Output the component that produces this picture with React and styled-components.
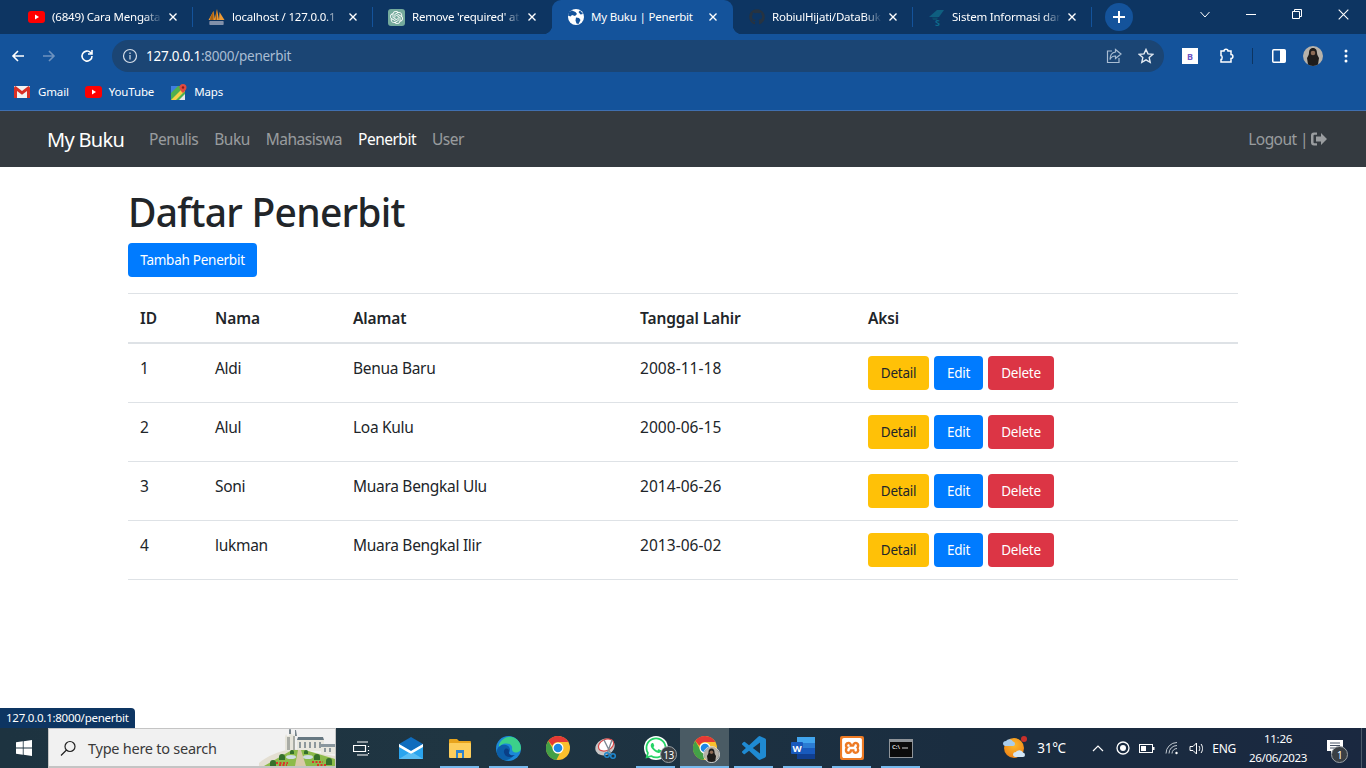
import React from 'react';
import styled, { createGlobalStyle } from 'styled-components';
import { FaGithub, FaWhatsapp } from 'react-icons/fa';
import { SiOpenai, SiXampp } from 'react-icons/si';

const UI_FONT = `"Noto Sans", "Open Sans", sans-serif`;

const GlobalStyle = createGlobalStyle`
  html, body {
    margin: 0;
    height: 100%;
    overflow: hidden;
    background: #fff;
    font-family: ${UI_FONT};
  }
  * { box-sizing: border-box; }
`;

const Shell = styled.div`
  display: flex;
  flex-direction: column;
  height: 768px;
`;

/* browser tabs */
const TabStrip = styled.div`
  display: flex;
  align-items: stretch;
  height: 34px;
  padding-left: 13px;
  background: #0d3562;
`;

const TabBox = styled.div`
  position: relative;
  display: flex;
  align-items: center;
  width: ${(p) => p.$width}px;
  padding: 0 16px 0 15px;
  gap: 7px;
  color: #fff;
  background: ${(p) => (p.$active ? '#14539b' : 'transparent')};
  border-radius: 9px 9px 0 0;

  ${(p) => !p.$active && !p.$noSep && `
    &::after {
      content: '';
      position: absolute;
      right: 0;
      top: 7px;
      height: 20px;
      width: 1px;
      background: #14539b;
    }
  `}

  ${(p) => p.$active && `
    &::before, &::after {
      content: '';
      position: absolute;
      bottom: 0;
      width: 9px;
      height: 9px;
    }
    &::before {
      left: -9px;
      background: radial-gradient(circle at 0 0, transparent 9px, #14539b 9.5px);
    }
    &::after {
      right: -9px;
      background: radial-gradient(circle at 100% 0, transparent 9px, #14539b 9.5px);
    }
  `}
`;

const TabIcon = styled.span`
  display: flex;
  flex: none;
  width: 17px;
  height: 17px;
  align-items: center;
  justify-content: center;
`;

const TabTitle = styled.span`
  flex: 1;
  min-width: 0;
  overflow: hidden;
  white-space: nowrap;
  font-size: 11.5px;
  letter-spacing: -0.2px;
  line-height: 16px;
  ${(p) => p.$fade && `mask-image: linear-gradient(to right, #000 84%, transparent 100%);`}
`;

const CloseSvg = styled.svg`
  flex: none;
`;

const NewTab = styled.div`
  display: flex;
  align-items: center;
  justify-content: center;
  width: 28px;
  height: 28px;
  margin: 3px 0 0 13px;
  border-radius: 50%;
  background: #14539b;
`;

const WindowControls = styled.div`
  display: flex;
  align-items: center;
  align-self: flex-start;
  margin-left: auto;
  color: #fff;
`;

const WinButton = styled.div`
  display: flex;
  align-items: center;
  justify-content: center;
  width: 46px;
  height: 28px;
`;

/* address bar row */
const Toolbar = styled.div`
  display: flex;
  align-items: center;
  height: 42px;
  padding: 2px 0 0 4px;
  background: #14539b;
`;

const NavIcon = styled.div`
  display: flex;
  align-items: center;
  justify-content: center;
  flex: none;
  width: ${(p) => p.$w || 28}px;
  height: 28px;
  margin-right: ${(p) => p.$mr || 0}px;
`;

const Omnibox = styled.div`
  display: flex;
  align-items: center;
  flex: none;
  width: 1052px;
  height: 32px;
  margin: 0 12px 0 11px;
  padding: 0 2px 0 10px;
  background: #1b4574;
  border-radius: 16px;
`;

const Url = styled.span`
  margin-left: 8px;
  font-size: 13.5px;
  letter-spacing: -0.25px;
  color: #a9bdd3;
  flex: 1;

  b {
    font-weight: 400;
    color: #fff;
  }
`;

const ExtBadge = styled.span`
  display: flex;
  align-items: center;
  justify-content: center;
  width: 16px;
  height: 16px;
  background: #fff;
  color: #6f55c4;
  font-size: 9px;
  font-weight: 700;
`;

const ToolDivider = styled.span`
  flex: none;
  width: 1px;
  height: 16px;
  margin: 0 5px 0 4px;
  background: #0d3562;
`;

/* bookmarks row */
const Bookmarks = styled.div`
  display: flex;
  align-items: center;
  height: 34px;
  padding: 0 0 3px 14px;
  background: #14539b;
`;

const Bookmark = styled.div`
  display: flex;
  align-items: center;
  gap: ${(p) => p.$gap}px;
  margin-right: ${(p) => p.$mr}px;
  color: #fff;
  font-size: 11.5px;
  letter-spacing: -0.15px;
`;

/* the page itself */
const Page = styled.div`
  position: relative;
  flex: 1;
  min-height: 0;
  background: #fff;
  color: #212529;
`;

const Navbar = styled.nav`
  display: flex;
  align-items: center;
  height: 57px;
  padding: 0 39px 0 47px;
  background: #343a40;
  border-top: 1px solid #3f6fb0;
`;

const Brand = styled.a`
  margin-right: 25px;
  font-size: 20px;
  letter-spacing: -0.7px;
  color: #fff;
`;

const NavLink = styled.a`
  margin-right: 16px;
  font-size: 15.5px;
  letter-spacing: -0.5px;
  color: ${(p) => (p.$active ? '#fff' : 'rgba(255,255,255,.5)')};
`;

const LogoutLink = styled.a`
  display: flex;
  align-items: center;
  gap: 3px;
  margin-left: auto;
  font-size: 15.5px;
  letter-spacing: -0.55px;
  color: rgba(255,255,255,.5);
`;

const Container = styled.main`
  width: 1110px;
  margin: 0 auto;
  padding-top: 21px;
`;

const Title = styled.h1`
  margin: 0 0 7px;
  font-size: 39px;
  font-weight: 500;
  line-height: 48px;
  letter-spacing: -0.73px;
`;

const Button = styled.button`
  width: ${(p) => p.$w}px;
  height: 34px;
  padding: 0 0 1px;
  border: 0;
  border-radius: 4px;
  font-family: inherit;
  font-size: 13.5px;
  letter-spacing: -0.25px;
  color: ${(p) => (p.$tone === 'warning' ? '#212529' : '#fff')};
  background: ${(p) =>
    p.$tone === 'warning' ? '#ffc107' : p.$tone === 'danger' ? '#dc3545' : '#007bff'};
`;

const Table = styled.table`
  width: 100%;
  margin-top: 16px;
  border-collapse: collapse;
  table-layout: fixed;
  font-size: 15.5px;
  letter-spacing: -0.3px;

  th, td {
    padding: 12px;
    text-align: left;
    vertical-align: top;
    line-height: 24px;
    border-top: 1px solid #dee2e6;
  }
  th {
    font-weight: 600;
    letter-spacing: -0.1px;
    border-bottom: 2px solid #dee2e6;
  }
  tr:last-child td {
    border-bottom: 1px solid #dee2e6;
  }
`;

const DateCell = styled.td`
  letter-spacing: 0.05px;
`;

const Actions = styled.div`
  display: flex;
  gap: 5px;
`;

const StatusBubble = styled.div`
  position: absolute;
  left: 0;
  bottom: 0;
  height: 20px;
  padding: 0 6px;
  background: #0d3562;
  border-top-right-radius: 4px;
  color: #fff;
  font-size: 11.5px;
  letter-spacing: -0.25px;
  line-height: 19px;
`;

/* windows taskbar */
const Taskbar = styled.footer`
  display: flex;
  align-items: stretch;
  flex: none;
  height: 40px;
  background: linear-gradient(to right, #1d3340, #1f3542 35%, #1a2d40 70%, #1a2840);
  color: #fff;
`;

const StartButton = styled.div`
  display: flex;
  align-items: center;
  justify-content: center;
  width: 48px;
`;

const SearchBox = styled.div`
  position: relative;
  display: flex;
  align-items: center;
  width: 288px;
  padding-left: 11px;
  gap: 12px;
  background: #f1f1f1;
  border: 1px solid #c4c4c4;
  border-bottom-width: 2px;
  overflow: hidden;
  color: #3a3a3a;
  font-size: 14.5px;
  letter-spacing: -0.25px;
`;

const Scenery = styled.svg`
  position: absolute;
  right: 0;
  bottom: 0;
`;

const TaskItem = styled.div`
  position: relative;
  display: flex;
  align-items: center;
  justify-content: center;
  width: ${(p) => p.$w || 49}px;
  background: ${(p) => (p.$active ? '#4a5b64' : 'transparent')};

  ${(p) => p.$open && `
    &::after {
      content: '';
      position: absolute;
      bottom: 0;
      left: ${p.$active ? 0 : 5}px;
      right: ${p.$active ? 0 : 5}px;
      height: 2px;
      background: #76b9ed;
    }
  `}
`;

const CountBadge = styled.span`
  position: absolute;
  display: flex;
  align-items: center;
  justify-content: center;
  right: ${(p) => p.$right}px;
  bottom: ${(p) => p.$bottom}px;
  width: 17px;
  height: 17px;
  border-radius: 50%;
  background: #3a3f44;
  border: 1px solid #9aa0a5;
  color: #fff;
  font-size: 10px;
  letter-spacing: -0.5px;
`;

const AvatarBadge = styled.span`
  position: absolute;
  display: flex;
  right: 9px;
  bottom: 5px;
  border-radius: 50%;
  border: 1px solid #d8d8d8;
`;

const Tray = styled.div`
  display: flex;
  align-items: center;
  margin-left: auto;
`;

const WeatherSlot = styled.span`
  display: flex;
  margin-right: 9px;
`;

const Temperature = styled.span`
  margin-right: 20px;
  font-size: 13.5px;
  letter-spacing: -0.3px;
`;

const TrayIcon = styled.span`
  display: flex;
  align-items: center;
  justify-content: center;
  width: 24.5px;
`;

const Lang = styled.span`
  margin: 0 12px 0 4px;
  font-size: 12px;
  letter-spacing: -0.3px;
`;

const Clock = styled.div`
  width: 60px;
  text-align: center;
  font-size: 11.5px;
  letter-spacing: -0.3px;
  line-height: 19px;
`;

const NoticeArea = styled.div`
  position: relative;
  display: flex;
  align-items: center;
  justify-content: center;
  width: 54px;
  height: 100%;
  padding-bottom: 3px;
  border-right: 1px solid #4b5a6a;
  margin-right: 4px;
`;

const GptTile = styled.span`
  display: flex;
  padding: 2px;
  background: #74aa9c;
  border-radius: 3px;
`;

const WhatsappTile = styled.span`
  display: flex;
  background: #fff;
  border-radius: 50%;
`;

const XamppTile = styled.span`
  display: flex;
  padding: 2px;
  background: #ed7a24;
  border-radius: 2px;
`;

/* drawn icons */
const YoutubeIcon = () => (
  <svg width="17" height="12" viewBox="0 0 17 12">
    <rect width="17" height="12" rx="3" fill="#f00" />
    <path d="M7 3.5v5l4-2.5z" fill="#fff" />
  </svg>
);

const SailIcon = () => (
  <svg width="17" height="17" viewBox="0 0 17 17">
    <path d="M.5 11 5.500 2 7 11zM6.500 11 9 0l2 11zM11 11l.5-8 5 8z" fill="#ee9a34" />
    <path d="M2.500 8 5.500 2v9H2zM9 0v11H7.500z" fill="#a9610f" />
    <rect x="1" y="12" width="15" height="4" rx="1" fill="#5d6f8f" />
    <path d="M2 13h13M2 15h13" stroke="#c6d0dd" strokeWidth=".7" />
  </svg>
);

const GlobeIcon = () => (
  <svg width="16" height="16" viewBox="0 0 16 16">
    <circle cx="8" cy="8" r="8" fill="#fff" />
    <path d="M4 1.500 7.500 3 9 5 7 7 4 6 2.500 7.500 0 6.500 1 3zM8 8.500l3 .5 1.500 2-2 4-2-.500-1-3zM12 1.500l3 3.500-2.500.5-2-2.500z" fill="#14539b" />
  </svg>
);

const ScholarIcon = () => (
  <svg width="17" height="19" viewBox="0 0 17 19">
    <path d="M1 9 9 2h7l-5 7z" fill="#0f5f80" />
    <path d="M4 9.500h6l-1 2.500H5z" fill="#0d4c6c" />
    <text x="7" y="18" fontSize="9" fontWeight="700" fill="#0e6a8c">S</text>
  </svg>
);

const CloseGlyph = ({ size = 8, weight = 1.4 }) => (
  <CloseSvg width={size} height={size} viewBox="0 0 8 8">
    <path d="M.5.500l7 7M7.500.500l-7 7" stroke="#fff" strokeWidth={weight} fill="none" />
  </CloseSvg>
);

const Line = ({ d, w = 16, h = 16, stroke = '#fff', sw = 1.6 }) => (
  <svg width={w} height={h} viewBox={`0 0 ${w} ${h}`} fill="none" stroke={stroke} strokeWidth={sw}>
    <path d={d} />
  </svg>
);

const GmailIcon = () => (
  <svg width="16" height="12" viewBox="0 0 16 12">
    <rect width="16" height="12" rx="1" fill="#f2f2f2" />
    <path d="M0 1.500V12h3V5l5 3.800L13 5v7h3V1.500L14.500 0 8 5 1.500 0z" fill="#d93025" />
  </svg>
);

const MapsIcon = () => (
  <svg width="16" height="16" viewBox="0 0 16 16">
    <rect y="2" width="14" height="14" fill="#4fb04f" />
    <path d="M0 16 14 2v5L5 16z" fill="#f7d046" />
    <path d="M0 2h7L0 9z" fill="#3f7fe0" />
    <path d="M8 16l6-6v6z" fill="#e8e8e8" />
    <path d="M12 0a3.500 3.500 0 0 1 3.500 3.500C15.500 6 12 9 12 9S8.500 6 8.500 3.500A3.500 3.500 0 0 1 12 0z" fill="#e04a3f" />
    <circle cx="12" cy="3.500" r="1.200" fill="#8c1d18" />
  </svg>
);

const Avatar = ({ size = 20 }) => (
  <svg width={size} height={size} viewBox="0 0 20 20">
    <circle cx="10" cy="10" r="10" fill="#b7b2aa" />
    <path d="M10 2c3 0 4 2.500 4 5 0 2 1 3 2 5l-1 6.500a10 10 0 0 1-10 0L4 12c1-2 2-3 2-5 0-2.500 1-5 4-5z" fill="#1e1c1b" />
    <circle cx="10" cy="7" r="2.300" fill="#8b6a55" />
  </svg>
);

const ChromeIcon = ({ size = 24 }) => (
  <svg width={size} height={size} viewBox="0 0 24 24">
    <circle cx="12" cy="12" r="12" fill="#fbc02d" />
    <path d="M12 0a12 12 0 0 1 10.400 6H12a6 6 0 0 0-5.600 3.800L2.300 4.900A12 12 0 0 1 12 0z" fill="#e53935" />
    <path d="M2.300 4.900l5 8.600a5.500 5.500 0 0 0 6.500 4.100L10.300 24A12 12 0 0 1 2.300 4.900z" fill="#43a047" />
    <circle cx="12" cy="12" r="5.500" fill="#fff" />
    <circle cx="12" cy="12" r="4.300" fill="#1e88e5" />
  </svg>
);

const EdgeIcon = () => (
  <svg width="25" height="25" viewBox="0 0 25 25">
    <circle cx="12.500" cy="12.500" r="12.500" fill="#1b88d8" />
    <path d="M3 9C5 3 11 0 16 1c5 1 9 6 9 11 0 3-3 5-6 4.500-2-.3-3-2-3-3.500 1-4-3-6-7-5.500S4 10 3 14z" fill="#3cd08a" />
    <path d="M1 14c1-4 5-6 9-5 4 1 5 5 3 8-1 2 1 3.500 4 3-3 4-9 6-13 2-3-2-3.500-5-3-8z" fill="#0c5ea8" />
    <path d="M9 13c2-1 4 0 4 2-1 3 2 5 6 4-2 2-6 3-9 1-2-2-3-5-1-7z" fill="#0a3f86" />
  </svg>
);

const MailIcon = () => (
  <svg width="24" height="22" viewBox="0 0 24 22">
    <rect y="7" width="24" height="15" fill="#2aa4ee" />
    <path d="M0 7 12 0l12 7-12 7z" fill="#0f6cbd" />
    <path d="M0 7l12 7 12-7v3l-12 7-12-7z" fill="#fff" />
    <path d="M0 22 10 15.800l2 1.200 2-1.200L24 22z" fill="#59bdf4" />
  </svg>
);

const FolderIcon = () => (
  <svg width="22" height="19" viewBox="0 0 22 19">
    <path d="M0 1a1 1 0 0 1 1-1h7l2 2h11a1 1 0 0 1 1 1v3H0z" fill="#e7a41d" />
    <rect y="4" width="22" height="15" rx="1" fill="#fcce5c" />
    <rect x="7" y="11" width="8" height="8" fill="#2e84cc" />
    <rect x="9" y="14" width="4" height="5" fill="#fcce5c" />
  </svg>
);

const SnipIcon = () => (
  <svg width="24" height="24" viewBox="0 0 24 24">
    <ellipse cx="10" cy="11" rx="10" ry="8" transform="rotate(-25 10 11)" fill="#c8c6c6" />
    <ellipse cx="11" cy="9" rx="8" ry="5.500" transform="rotate(-25 11 9)" fill="#fff" stroke="#d84a4a" strokeWidth="1.200" />
    <path d="M9 4l7 14M17 4l-5 14" stroke="#7d8a94" strokeWidth="1.400" />
    <circle cx="12" cy="19" r="2.300" fill="none" stroke="#1f88cf" strokeWidth="1.500" />
    <circle cx="18" cy="20" r="2.300" fill="none" stroke="#1f88cf" strokeWidth="1.500" />
  </svg>
);

const VscodeIcon = () => (
  <svg width="24" height="24" viewBox="0 0 24 24">
    <path fill="#1f8ad2" d="M23.15 2.587L18.21.21a1.494 1.494 0 0 0-1.705.29l-9.46 8.63-4.12-3.128a.999.999 0 0 0-1.276.057L.327 7.261A1 1 0 0 0 .326 8.74L3.899 12 .326 15.26a1 1 0 0 0 .001 1.479L1.65 17.94a.999.999 0 0 0 1.276.057l4.12-3.128 9.46 8.63a1.492 1.492 0 0 0 1.704.29l4.942-2.377A1.5 1.5 0 0 0 24 20.06V3.939a1.5 1.5 0 0 0-.85-1.352zm-5.146 14.861L10.826 12l7.178-5.448v10.896z" />
  </svg>
);

const WordIcon = () => (
  <svg width="24" height="22" viewBox="0 0 24 22">
    <rect x="6" width="18" height="22" rx="1" fill="#2b7cd3" />
    <rect x="6" y="0" width="18" height="6" fill="#41a5ee" />
    <rect x="6" y="11" width="18" height="6" fill="#185abd" />
    <rect x="6" y="17" width="18" height="5" fill="#103f91" />
    <rect y="5" width="12" height="12" rx="1" fill="#185abd" />
    <text x="6" y="14.500" textAnchor="middle" fontSize="9.500" fontWeight="700" fill="#fff">W</text>
  </svg>
);

const CmdIcon = () => (
  <svg width="24" height="19" viewBox="0 0 24 19">
    <rect width="24" height="19" fill="#8f9499" />
    <rect x="1" y="3" width="22" height="15" fill="#0b0b0b" />
    <text x="3" y="9.500" fontSize="6" fontWeight="700" fill="#d0d0d0">C:\</text>
    <path d="M13 9h6" stroke="#d0d0d0" />
  </svg>
);

const WeatherIcon = () => (
  <svg width="26" height="26" viewBox="0 0 26 26">
    <defs>
      <radialGradient id="sun" cx="50%" cy="35%" r="70%">
        <stop offset="0" stopColor="#fdbb2d" />
        <stop offset="1" stopColor="#ee7f14" />
      </radialGradient>
    </defs>
    <circle cx="12" cy="13" r="10" fill="url(#sun)" />
    <circle cx="22" cy="4" r="3" fill="#c9302a" />
    <path d="M1 9a3 3 0 0 1 3-3 4 4 0 0 1 7 .5 2.500 2.500 0 0 1 2 2.500 2 2 0 0 1-2 2H3a2.500 2.500 0 0 1-2-2z" fill="#a9cdec" />
    <path d="M11 20a3 3 0 0 1 3-3 4 4 0 0 1 7 .5 2.500 2.500 0 0 1 2 2.500 2 2 0 0 1-2 2H13a2.500 2.500 0 0 1-2-2z" fill="#d3e6f6" />
  </svg>
);

const ShareIcon = () => (
  <svg width="16" height="16" viewBox="0 0 16 16" fill="none" stroke="#a9bdd3" strokeWidth="1.200">
    <path d="M6 3H1.500v11.500H13V10" />
    <path d="M9.500 1.500 15 6l-5.500 4.500V8C7 8 5 9 4 11.500 4 7 6 4.500 9.500 4z" />
  </svg>
);

const StarIcon = () => (
  <svg width="16" height="16" viewBox="0 0 16 16" fill="none" stroke="#e3eaf2" strokeWidth="1.400">
    <path d="M8 1.500l2 4.400 4.800.5-3.600 3.200 1 4.700L8 11.900l-4.200 2.400 1-4.700L1.200 6.400 6 5.900z" />
  </svg>
);

const SignOutIcon = () => (
  <svg width="16" height="16" viewBox="0 0 16 16" fill="currentColor">
    <path d="M6 1.500H3a3 3 0 0 0-3 3v7a3 3 0 0 0 3 3h3V12.200H3.500a1 1 0 0 1-1-1V4.800a1 1 0 0 1 1-1H6z" />
    <path d="M5 5.500h5V2l6 6-6 6v-3.500H5z" />
  </svg>
);

const CastleGarden = () => (
  <Scenery width="76" height="38" viewBox="0 0 76 38">
    <path d="M0 38v-3C8 28 20 23 33 21l43 7v10z" fill="#e4dfd2" />
    <path d="M26 9l1-3 1 2h2l1-4h1l1 3 2-1 1 3v14H26z" fill="#e6e4da" />
    <path d="M28 9h3v13h-3zM34 8h2v14h-2z" fill="#a9aca6" />
    <path d="M30 2l1-2 1 2v4h-2zM36 2h1l1 6h-2z" fill="#76838a" />
    <path d="M38 12h27v11H38z" fill="#e9e8df" />
    <path d="M39 9h25l1 3H38z" fill="#667781" />
    <path d="M62 18h14v8H62z" fill="#e9e8df" />
    <path d="M62 16h14v3H62z" fill="#8a979e" />
    <path d="M41 14v6M46 14v6M51 14v6M56 14v6M61 14v6M66 20v4M71 20v4" stroke="#6f7e86" strokeWidth="1.500" />
    <path d="M5 38 33 22h13l30 9v7z" fill="#8dbb4a" />
    <path d="M36 38l3-16h3l5 16z" fill="#d8caa8" />
    <ellipse cx="32" cy="29" rx="5" ry="2" fill="#cfdde2" />
    <ellipse cx="49" cy="29" rx="5" ry="2" fill="#cfdde2" />
    <path d="M11 38v-3a3 3 0 0 1 6 0v3zM20 32v-3a3 3 0 0 1 6 0v3zM31 26v-2a2 2 0 0 1 4 0v2zM45 26v-2a2 2 0 0 1 4 0v2zM55 32v-3a3 3 0 0 1 6 0v3zM67 37v-4a3 3 0 0 1 6 0v4z" fill="#35702b" />
    <path d="M17 35h12M20 37h8M53 34h11M58 37h9" stroke="#d8362b" strokeWidth="2" strokeDasharray="2 1.500" />
  </Scenery>
);

const tabs = [
  { title: '(6849) Cara Mengata', icon: <YoutubeIcon />, width: 180 },
  { title: 'localhost / 127.0.0.1', icon: <SailIcon />, width: 180 },
  { title: "Remove 'required' at", icon: <GptTile><SiOpenai size={13} color="#fff" /></GptTile>, width: 179, noSep: true },
  { title: 'My Buku | Penerbit', icon: <GlobeIcon />, width: 181, active: true },
  { title: 'RobiulHijati/DataBuk', icon: <FaGithub size={16} color="#263341" />, width: 180 },
  { title: 'Sistem Informasi dar', icon: <ScholarIcon />, width: 179 },
];

const penerbit = [
  { id: 1, nama: 'Aldi', alamat: 'Benua Baru', tanggal: '2008-11-18' },
  { id: 2, nama: 'Alul', alamat: 'Loa Kulu', tanggal: '2000-06-15' },
  { id: 3, nama: 'Soni', alamat: 'Muara Bengkal Ulu', tanggal: '2014-06-26' },
  { id: 4, nama: 'lukman', alamat: 'Muara Bengkal Ilir', tanggal: '2013-06-02' },
];

const menu = ['Penulis', 'Buku', 'Mahasiswa', 'Penerbit', 'User'];

export default function App() {
  return (
    <Shell>
      <GlobalStyle />

      <TabStrip>
        {tabs.map((t) => (
          <TabBox key={t.title} $width={t.width} $active={t.active} $noSep={t.noSep}>
            <TabIcon>{t.icon}</TabIcon>
            <TabTitle $fade={!t.active}>{t.title}</TabTitle>
            <CloseGlyph />
          </TabBox>
        ))}
        <NewTab>
          <Line d="M7 1v12M1 7h12" w={14} h={14} sw={2} />
        </NewTab>
        <WindowControls>
          <WinButton>
            <Line d="M.5 1 5 6l4.500-5" w={10} h={7} sw={1} />
          </WinButton>
          <WinButton>
            <Line d="M0 .5h10" w={10} h={1} sw={1} />
          </WinButton>
          <WinButton>
            <Line d="M.5 2.500h7v7h-7zM2.500 2.500v-2h7v7h-2" w={10} h={10} sw={1} />
          </WinButton>
          <WinButton>
            <CloseGlyph size={11} weight={0.8} />
          </WinButton>
        </WindowControls>
      </TabStrip>

      <Toolbar>
        <NavIcon $mr={3}>
          <Line d="M14 8H3M8 3 3 8l5 5" />
        </NavIcon>
        <NavIcon $mr={10}>
          <Line d="M2 8h11M8 3l5 5-5 5" stroke="#6e93c0" />
        </NavIcon>
        <NavIcon>
          <Line d="M13 8a5 5 0 1 1-1.500-3.500L13 6M13 2v4H9" />
        </NavIcon>
        <Omnibox>
          <Line d="M8 1.500a6.500 6.500 0 1 0 0 13 6.500 6.500 0 0 0 0-13zM8 7v4.500M8 4.500v1.500" stroke="#d8e0ea" sw={1.2} />
          <Url><b>127.0.0.1</b>:8000/penerbit</Url>
          <NavIcon $w={32}><ShareIcon /></NavIcon>
          <NavIcon $w={32}><StarIcon /></NavIcon>
        </Omnibox>
        <NavIcon $w={28}><ExtBadge>B</ExtBadge></NavIcon>
        <NavIcon $w={44}>
          <Line d="M3 3h3c0-2.500 4-2.500 4 0h3v3.500c2.500 0 2.500 4 0 4V14H3v-2.500c1.500 0 1.500-4 0-4z" sw={1.5} />
        </NavIcon>
        <ToolDivider />
        <NavIcon $w={42}>
          <svg width="14" height="14" viewBox="0 0 14 14">
            <rect x=".75" y=".75" width="12.500" height="12.500" rx="1" fill="none" stroke="#fff" strokeWidth="1.500" />
            <rect x="8" y="1" width="5" height="12" fill="#fff" />
          </svg>
        </NavIcon>
        <NavIcon $w={26}><Avatar /></NavIcon>
        <NavIcon $w={40}>
          <svg width="4" height="14" viewBox="0 0 4 14" fill="#fff">
            <circle cx="2" cy="2" r="1.500" /><circle cx="2" cy="7" r="1.500" /><circle cx="2" cy="12" r="1.500" />
          </svg>
        </NavIcon>
      </Toolbar>

      <Bookmarks>
        <Bookmark $gap={8} $mr={16}><GmailIcon />Gmail</Bookmark>
        <Bookmark $gap={7} $mr={17}><YoutubeIcon />YouTube</Bookmark>
        <Bookmark $gap={7} $mr={0}><MapsIcon />Maps</Bookmark>
      </Bookmarks>

      <Page>
        <Navbar>
          <Brand>My Buku</Brand>
          {menu.map((m) => (
            <NavLink key={m} $active={m === 'Penerbit'}>{m}</NavLink>
          ))}
          <LogoutLink>Logout | <SignOutIcon /></LogoutLink>
        </Navbar>

        <Container>
          <Title>Daftar Penerbit</Title>
          <Button $w={129}>Tambah Penerbit</Button>
          <Table>
            <colgroup>
              <col width="75" /><col width="138" /><col width="287" /><col width="228" /><col />
            </colgroup>
            <thead>
              <tr><th>ID</th><th>Nama</th><th>Alamat</th><th>Tanggal Lahir</th><th>Aksi</th></tr>
            </thead>
            <tbody>
              {penerbit.map((p) => (
                <tr key={p.id}>
                  <td>{p.id}</td>
                  <td>{p.nama}</td>
                  <td>{p.alamat}</td>
                  <DateCell>{p.tanggal}</DateCell>
                  <td>
                    <Actions>
                      <Button $tone="warning" $w={61}>Detail</Button>
                      <Button $w={49}>Edit</Button>
                      <Button $tone="danger" $w={66}>Delete</Button>
                    </Actions>
                  </td>
                </tr>
              ))}
            </tbody>
          </Table>
        </Container>

        <StatusBubble>127.0.0.1:8000/penerbit</StatusBubble>
      </Page>

      <Taskbar>
        <StartButton>
          <svg width="16" height="16" viewBox="0 0 16 16" fill="#fff">
            <path d="M0 2.300 6.800 1.300V7.600H0zM7.600 1.200 16 0v7.600H7.600zM0 8.400h6.800v6.300L0 13.700zM7.600 8.400H16V16l-8.400-1.200z" />
          </svg>
        </StartButton>
        <SearchBox>
          <Line d="M6.500 10 1 15.500M10 1.500a5 5 0 1 1 0 10 5 5 0 0 1 0-10z" stroke="#222" sw={1.2} />
          Type here to search
          <CastleGarden />
        </SearchBox>
        <TaskItem $w={50}>
          <Line d="M4 1h11M4 14h11M.5 4.500h12v6H.5zM15.500 5v1M15.500 9v1M15.500 12v1" w={17} h={15} sw={1.2} />
        </TaskItem>
        <TaskItem><MailIcon /></TaskItem>
        <TaskItem $open><FolderIcon /></TaskItem>
        <TaskItem $open><EdgeIcon /></TaskItem>
        <TaskItem><ChromeIcon /></TaskItem>
        <TaskItem><SnipIcon /></TaskItem>
        <TaskItem $open>
          <WhatsappTile><FaWhatsapp size={24} color="#25d366" /></WhatsappTile>
          <CountBadge $right={3} $bottom={5}>13</CountBadge>
        </TaskItem>
        <TaskItem $open $active>
          <ChromeIcon />
          <AvatarBadge><Avatar size={15} /></AvatarBadge>
        </TaskItem>
        <TaskItem $open><VscodeIcon /></TaskItem>
        <TaskItem $open><WordIcon /></TaskItem>
        <TaskItem $open>
          <XamppTile><SiXampp size={20} color="#fff" /></XamppTile>
        </TaskItem>
        <TaskItem $open><CmdIcon /></TaskItem>

        <Tray>
          <WeatherSlot><WeatherIcon /></WeatherSlot>
          <Temperature>31°C</Temperature>
          <TrayIcon><Line d="M1 7l5-5 5 5" w={12} h={8} sw={1.2} /></TrayIcon>
          <TrayIcon>
            <svg width="14" height="14" viewBox="0 0 14 14">
              <circle cx="7" cy="7" r="6" fill="none" stroke="#fff" strokeWidth="1.300" />
              <circle cx="7" cy="7" r="3" fill="#fff" />
            </svg>
          </TrayIcon>
          <TrayIcon>
            <svg width="16" height="9" viewBox="0 0 16 9">
              <rect x=".5" y=".5" width="13" height="8" fill="none" stroke="#fff" />
              <rect x="2" y="2" width="5" height="5" fill="#fff" />
              <rect x="14" y="3" width="1.500" height="3" fill="#fff" />
            </svg>
          </TrayIcon>
          <TrayIcon>
            <svg width="14" height="14" viewBox="0 0 14 14" fill="none" stroke="#c3cbd3">
              <path d="M1 12.500A11 11 0 0 1 12 1.500M4 12.500A8 8 0 0 1 12 4.500M7 12.500A5 5 0 0 1 12 7.500" />
              <circle cx="11.500" cy="12" r="1.200" fill="#fff" stroke="none" />
            </svg>
          </TrayIcon>
          <TrayIcon>
            <Line d="M1 5.500h3L7.500 2v11L4 9.500H1zM10 5c1 1.500 1 3.500 0 5M12 3c2 2.500 2 6.500 0 9" w={15} h={15} sw={1} />
          </TrayIcon>
          <Lang>ENG</Lang>
          <Clock>11:26<br />26/06/2023</Clock>
          <NoticeArea>
            <svg width="16" height="14" viewBox="0 0 16 14">
              <path d="M0 0h16v11H7l-3 3v-3H0z" fill="#fff" />
              <path d="M3 3h10M3 5.500h10M3 8h6" stroke="#1a2840" strokeWidth=".8" />
            </svg>
            <CountBadge $right={13} $bottom={5}>1</CountBadge>
          </NoticeArea>
        </Tray>
      </Taskbar>
    </Shell>
  );
}
